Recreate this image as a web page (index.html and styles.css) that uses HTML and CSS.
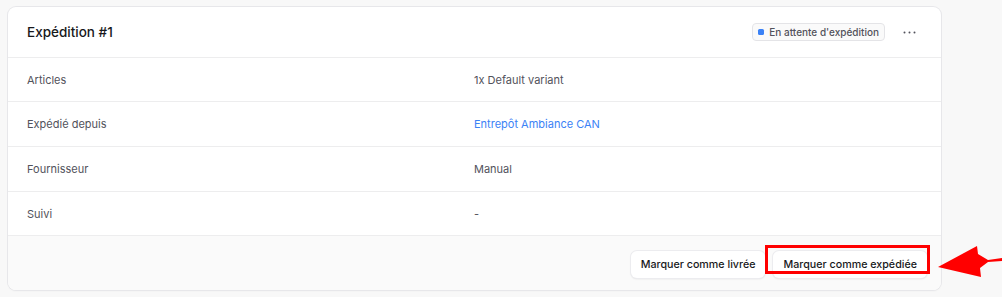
FILE: index.html
```html
<!DOCTYPE html>
<html>
  <head>
    <title>Expédition</title>
    <link rel="stylesheet" href="styles.css">
  </head>
  <body>
    <div class="page">
      <div class="card">
        <div class="card-header">
          <h2>Expédition #1</h2>
          <div class="header-actions">
            <span class="badge"><span class="badge-dot"></span>En attente d'expédition</span>
            <button class="icon-btn" aria-label="Actions">
              <svg width="15" height="15" viewBox="0 0 15 15">
                <circle cx="2.5" cy="7.5" r="1" fill="#52525b" />
                <circle cx="7.5" cy="7.5" r="1" fill="#52525b" />
                <circle cx="12.5" cy="7.5" r="1" fill="#52525b" />
              </svg>
            </button>
          </div>
        </div>
        <div class="row short">
          <span class="label">Articles</span>
          <span class="value">1x Default variant</span>
        </div>
        <div class="row">
          <span class="label">Expédié depuis</span>
          <a class="value link" href="#">Entrepôt Ambiance CAN</a>
        </div>
        <div class="row">
          <span class="label">Fournisseur</span>
          <span class="value">Manual</span>
        </div>
        <div class="row short">
          <span class="label">Suivi</span>
          <span class="value">-</span>
        </div>
        <div class="card-footer">
          <button class="btn">Marquer comme livrée</button>
          <button class="btn">Marquer comme expédiée</button>
        </div>
      </div>
      <!-- annotation over the screenshot -->
      <div class="highlight-box"></div>
      <svg class="arrow" width="67" height="45" viewBox="0 0 67 45">
        <polygon points="3,27 42,6 43,14 53,20 67,18 67,21 53,22 45,28 46,37" fill="#ff0000" />
      </svg>
    </div>
  </body>
</html>
```

FILE: styles.css
```css
body {
  margin: 0;
  background-color: #f8f8f8;
  font-family: Inter, "Liberation Sans", sans-serif;
  color: #18181b;
}

.page {
  position: relative;
  width: 1002px;
  height: 297px;
  padding: 7px 0 0 8px;
  box-sizing: border-box;
}

.card {
  width: 933px;
  background-color: #fff;
  border-radius: 8px;
  box-shadow: 0 0 0 1px #e7e7ea, 0 1px 2px rgba(0, 0, 0, 0.06);
  overflow: hidden;
}

.card-header {
  display: flex;
  align-items: center;
  justify-content: space-between;
  height: 51px;
  padding: 0 22px 0 19px;
  border-bottom: 1px solid #ededee;
  box-sizing: border-box;
}

.card-header h2 {
  margin: 0;
  font-size: 13.5px;
  font-weight: 500;
  color: #18181b;
}

.header-actions {
  display: flex;
  align-items: center;
  gap: 14px;
}

.badge {
  display: inline-flex;
  align-items: center;
  gap: 5px;
  height: 18px;
  padding: 0 5px;
  font-size: 10px;
  font-weight: 500;
  color: #52525b;
  background-color: #fafafa;
  border: 1px solid #e4e4e7;
  border-radius: 4px;
  box-sizing: border-box;
}

.badge-dot {
  width: 6px;
  height: 6px;
  border-radius: 1.5px;
  background-color: #3b82f6;
}

.icon-btn {
  display: flex;
  align-items: center;
  justify-content: center;
  width: 20px;
  height: 20px;
  padding: 0;
  border: none;
  background: none;
}

.row {
  display: grid;
  grid-template-columns: 447px 1fr;
  align-items: center;
  height: 45px;
  padding: 0 19px;
  border-bottom: 1px solid #ededee;
  box-sizing: border-box;
  font-size: 11px;
}

.row.short {
  height: 44px;
}

.label {
  color: #52525b;
}

.value {
  color: #52525b;
}

.link {
  color: #3b82f6;
  text-decoration: none;
}

.card-footer {
  display: flex;
  justify-content: flex-end;
  align-items: center;
  gap: 8px;
  height: 54px;
  padding: 2px 14px 0;
  background-color: #fafafa;
  box-sizing: border-box;
}

.btn {
  height: 27px;
  padding: 0 10px;
  font-family: Inter, "Liberation Sans", sans-serif;
  font-size: 10.7px;
  font-weight: 500;
  color: #18181b;
  background-color: #fff;
  border: none;
  border-radius: 6px;
  box-shadow: 0 0 0 1px #ececef, 0 1px 2px rgba(0, 0, 0, 0.12);
}

.highlight-box {
  position: absolute;
  left: 765px;
  top: 245px;
  width: 165px;
  height: 29px;
  border: 3px solid #ff0000;
  box-sizing: border-box;
}

.arrow {
  position: absolute;
  left: 935px;
  top: 240px;
}
```
